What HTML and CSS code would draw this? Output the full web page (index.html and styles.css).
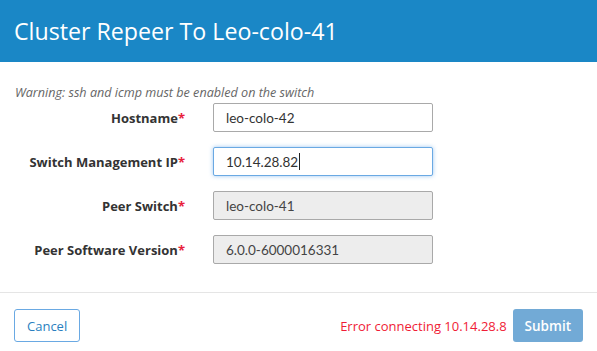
FILE: index.html
```html
<html>
    <head>
        <title>Cluster Repeer</title>
        <link rel="stylesheet" href="styles.css">
    </head>
    <body>
        <div class="modal">
            <div class="modal-header">
                <h1>Cluster Repeer To Leo-colo-41</h1>
            </div>

            <div class="modal-body">
                <p class="warning">Warning: ssh and icmp must be enabled on the switch</p>

                <div class="row">
                    <label>Hostname<span class="req">*</span></label>
                    <input type="text" class="field" value="leo-colo-42"/>
                </div>
                <div class="row">
                    <label>Switch Management IP<span class="req">*</span></label>
                    <div class="field focused">10.14.28.82<span class="caret"></span></div>
                </div>
                <div class="row">
                    <label>Peer Switch<span class="req">*</span></label>
                    <input type="text" class="field" value="leo-colo-41" disabled/>
                </div>
                <div class="row">
                    <label>Peer Software Version<span class="req">*</span></label>
                    <input type="text" class="field" value="6.0.0-6000016331" disabled/>
                </div>
            </div>

            <div class="modal-footer">
                <button class="btn-cancel">Cancel</button>
                <span class="error">Error connecting 10.14.28.8</span>
                <button class="btn-submit">Submit</button>
            </div>
        </div>
    </body>
</html>
```

FILE: styles.css
```css
body {
    font-family: "Open Sans", Lato, sans-serif;
    margin: 0;
    padding: 0;
    background-color: white;
    color: #333;
}

.modal-header {
    background-color: #1a87c6;
    height: 62px;
    padding: 0 14px;
    display: flex;
    align-items: center;
}

.modal-header h1 {
    margin: 0;
    color: white;
    font-weight: normal;
    font-size: 23.2px;
}

.modal-body {
    padding: 23px 0 13px 0;
    border-bottom: 1px solid #e5e5e5;
}

.warning {
    margin: 0 0 3px 15px;
    font-size: 12.6px;
    font-style: italic;
    color: #666;
    line-height: 15px;
}

.row {
    display: grid;
    grid-template-columns: 185px 220px;
    column-gap: 28px;
    align-items: center;
    margin-bottom: 15px;
}

.row label {
    text-align: right;
    font-weight: bold;
    font-size: 13px;
    color: #333;
}

.req {
    color: #e8203a;
}

.field {
    box-sizing: border-box;
    height: 29px;
    width: 220px;
    padding: 0 12px;
    border: 1px solid #a9a9a9;
    border-radius: 2px;
    font-family: Lato, "Open Sans", sans-serif;
    font-size: 13.5px;
    color: #333;
    background-color: white;
    display: flex;
    align-items: center;
}

.field:disabled {
    background-color: #ededed;
    color: #444;
}

.field.focused {
    border-color: #6aa9e3;
    box-shadow: 0 0 4px rgba(90, 160, 230, 0.6);
}

.caret {
    display: inline-block;
    width: 1px;
    height: 17px;
    background-color: #222;
    margin-left: 1px;
}

.modal-footer {
    display: flex;
    align-items: center;
    padding: 16px 14px 0 14px;
}

.btn-cancel {
    height: 33px;
    padding: 0 12px;
    border: 1px solid #6aa9e3;
    border-radius: 3px;
    background-color: white;
    color: #2a7fc0;
    font-family: "Open Sans", Lato, sans-serif;
    font-size: 13px;
}

.error {
    margin-left: auto;
    margin-right: 6px;
    color: #f01c36;
    font-size: 13px;
}

.btn-submit {
    height: 33px;
    padding: 0 12px;
    border: 0;
    border-radius: 3px;
    background-color: #72aad6;
    color: white;
    font-family: "Open Sans", Lato, sans-serif;
    font-size: 13.5px;
    font-weight: 600;
}
```
